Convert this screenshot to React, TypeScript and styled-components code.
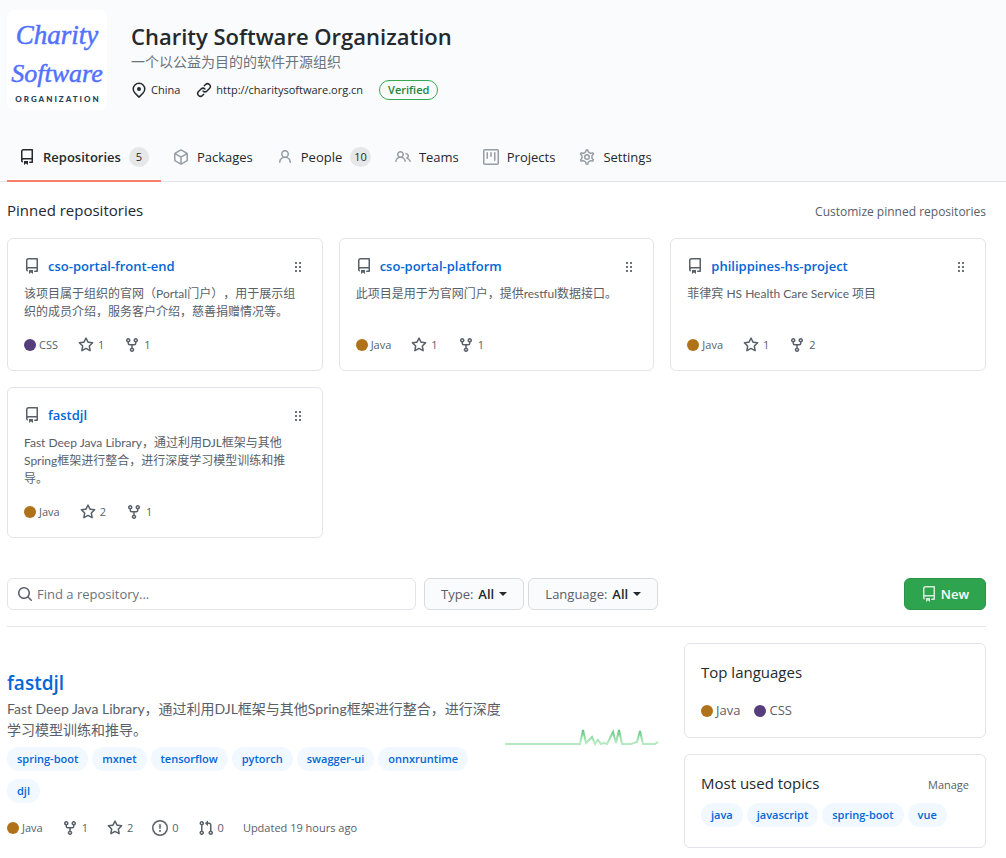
import React from "react";
import styled, { createGlobalStyle } from "styled-components";

const color = {
  text: "#24292e",
  muted: "#586069",
  faint: "#959da5",
  link: "#0366d6",
  border: "#e1e4e8",
  wash: "#fafbfc",
  tagBg: "#f1f8ff",
  green: "#2ea44f",
};

const GlobalStyle = createGlobalStyle`
  * { box-sizing: border-box; }
  body {
    margin: 0;
    background: #fff;
    color: ${color.text};
    font-family: "Open Sans", "Noto Sans CJK SC", sans-serif;
    font-size: 13px;
    line-height: 21px;
    text-spacing-trim: space-all;
  }
  h1, h2, h3, p, ul { margin: 0; padding: 0; }
  ul { list-style: none; }
  a { color: inherit; text-decoration: none; }
  svg { display: block; flex: none; }
`;

const paths = {
  repo: "M2 2.5A2.5 2.5 0 014.5 0h8.75a.75.75 0 01.75.75v12.5a.75.75 0 01-.75.75h-2.5a.75.75 0 110-1.5h1.75v-2h-8a1 1 0 00-.714 1.7.75.75 0 01-1.072 1.05A2.495 2.495 0 012 11.5v-9zm10.5-1V9h-8c-.356 0-.694.074-1 .208V2.5a1 1 0 011-1h8zM5 12.25v3.25a.25.25 0 00.4.2l1.45-1.087a.25.25 0 01.3 0L8.6 15.7a.25.25 0 00.4-.2v-3.25a.25.25 0 00-.25-.25h-3.5a.25.25 0 00-.25.25z",
  package: "M8.878.392a1.75 1.75 0 00-1.756 0l-5.25 3.045A1.75 1.75 0 001 4.951v6.098c0 .624.332 1.2.872 1.514l5.25 3.045a1.75 1.75 0 001.756 0l5.25-3.045c.54-.313.872-.89.872-1.514V4.951c0-.624-.332-1.2-.872-1.514L8.878.392zM7.875 1.69a.25.25 0 01.25 0l4.63 2.685L8 7.133 3.245 4.375l4.63-2.685zM2.5 5.677v5.372c0 .09.047.171.125.216l4.625 2.683V8.432L2.5 5.677zm6.25 8.271l4.625-2.683a.25.25 0 00.125-.216V5.677L8.75 8.432v5.516z",
  person: "M10.5 5a2.5 2.5 0 11-5 0 2.5 2.5 0 015 0zm.061 3.073a4 4 0 10-5.123 0 6.004 6.004 0 00-3.431 5.142.75.75 0 001.498.07 4.5 4.5 0 018.99 0 .75.75 0 101.498-.07 6.005 6.005 0 00-3.432-5.142z",
  people: "M5.5 3.5a2 2 0 100 4 2 2 0 000-4zM2 5.5a3.5 3.5 0 115.898 2.549 5.507 5.507 0 013.034 4.084.75.75 0 11-1.482.235 4.001 4.001 0 00-7.9 0 .75.75 0 01-1.482-.236A5.507 5.507 0 013.102 8.05 3.49 3.49 0 012 5.5zM11 4a.75.75 0 100 1.5 1.5 1.5 0 01.666 2.844.75.75 0 00-.416.672v.352a.75.75 0 00.574.73c1.2.289 2.162 1.2 2.522 2.372a.75.75 0 101.434-.44 5.01 5.01 0 00-2.56-3.012A3 3 0 0011 4z",
  project: "M1.75 0A1.75 1.75 0 000 1.75v12.5C0 15.216.784 16 1.75 16h12.5A1.75 1.75 0 0016 14.25V1.75A1.75 1.75 0 0014.25 0H1.75zM1.5 1.75a.25.25 0 01.25-.25h12.5a.25.25 0 01.25.25v12.5a.25.25 0 01-.25.25H1.75a.25.25 0 01-.25-.25V1.75zM11.75 3a.75.75 0 00-.75.75v7.5a.75.75 0 001.5 0v-7.5a.75.75 0 00-.75-.75zm-8.25.75a.75.75 0 011.5 0v5.5a.75.75 0 01-1.5 0v-5.5zM8 3a.75.75 0 00-.75.75v3.5a.75.75 0 001.5 0v-3.5A.75.75 0 008 3z",
  star: "M8 .25a.75.75 0 01.673.418l1.882 3.815 4.21.612a.75.75 0 01.416 1.279l-3.046 2.97.719 4.192a.75.75 0 01-1.088.791L8 12.347l-3.766 1.98a.75.75 0 01-1.088-.79l.72-4.194L.818 6.374a.75.75 0 01.416-1.28l4.21-.611L7.327.668A.75.75 0 018 .25zm0 2.445L6.615 5.5a.75.75 0 01-.564.41l-3.097.45 2.24 2.184a.75.75 0 01.216.664l-.528 3.084 2.769-1.456a.75.75 0 01.698 0l2.77 1.456-.53-3.084a.75.75 0 01.216-.664l2.24-2.183-3.096-.45a.75.75 0 01-.564-.41L8 2.694v.001z",
  fork: "M5 3.25a.75.75 0 11-1.5 0 .75.75 0 011.5 0zm0 2.122a2.25 2.25 0 10-1.5 0v.878A2.25 2.25 0 005.75 8.5h1.5v2.128a2.251 2.251 0 101.5 0V8.5h1.5a2.25 2.25 0 002.25-2.25v-.878a2.25 2.25 0 10-1.5 0v.878a.75.75 0 01-.75.75h-4.5A.75.75 0 015 6.25v-.878zm3.75 7.378a.75.75 0 11-1.5 0 .75.75 0 011.5 0zm3-8.75a.75.75 0 100-1.5.75.75 0 000 1.5z",
  search: "M11.5 7a4.499 4.499 0 11-8.998 0A4.499 4.499 0 0111.5 7zm-.82 4.74a6 6 0 111.06-1.06l3.04 3.04a.75.75 0 11-1.06 1.06l-3.04-3.04z",
  issue: "M8 1.5a6.5 6.5 0 100 13 6.5 6.5 0 000-13zM0 8a8 8 0 1116 0A8 8 0 010 8zm9 3a1 1 0 11-2 0 1 1 0 012 0zm-.25-6.25a.75.75 0 00-1.5 0v3.5a.75.75 0 001.5 0v-3.5z",
  pull: "M7.177 3.073L9.573.677A.25.25 0 0110 .854v4.792a.25.25 0 01-.427.177L7.177 3.427a.25.25 0 010-.354zM3.75 2.5a.75.75 0 100 1.5.75.75 0 000-1.5zm-2.25.75a2.25 2.25 0 113 2.122v5.256a2.251 2.251 0 11-1.5 0V5.372A2.25 2.25 0 011.5 3.25zM11 2.5h-1V4h1a1 1 0 011 1v5.628a2.251 2.251 0 101.5 0V5A2.5 2.5 0 0011 2.5zm1 10.25a.75.75 0 111.5 0 .75.75 0 01-1.5 0zM3.75 12a.75.75 0 100 1.5.75.75 0 000-1.5z",
  location: "M11.536 3.464a5 5 0 010 7.072L8 14.07l-3.536-3.535a5 5 0 117.072-7.072v.001zm1.06 8.132a6.5 6.5 0 10-9.192 0l3.535 3.536a1.5 1.5 0 002.122 0l3.535-3.536zM8 9a2 2 0 100-4 2 2 0 000 4z",
  link: "M7.775 3.275a.75.75 0 001.06 1.06l1.25-1.25a2 2 0 112.83 2.83l-2.5 2.5a2 2 0 01-2.83 0 .75.75 0 00-1.06 1.06 3.5 3.5 0 004.95 0l2.5-2.5a3.5 3.5 0 00-4.95-4.95l-1.25 1.25zm-4.69 9.64a2 2 0 010-2.83l2.5-2.5a2 2 0 012.83 0 .75.75 0 001.06-1.06 3.5 3.5 0 00-4.95 0l-2.5 2.5a3.5 3.5 0 004.95 4.95l1.25-1.25a.75.75 0 00-1.06-1.06l-1.25 1.25a2 2 0 01-2.83 0z",
};

type IconName = keyof typeof paths;

const Icon = ({ name }: { name: IconName }) => (
  <svg width="16" height="16" viewBox="0 0 16 16" fill="currentColor" fillRule="evenodd" aria-hidden="true">
    <path d={paths[name]} />
  </svg>
);

const GearIcon = () => (
  <svg width="16" height="16" viewBox="0 0 16 16" fill="none" stroke="currentColor" aria-hidden="true">
    <circle cx="8" cy="8" r="2.25" strokeWidth="1.5" />
    <path
      strokeWidth="1.35"
      transform="translate(8 8) scale(1.1) translate(-8 -8)"
      d="M7.429 1.525a6.593 6.593 0 011.142 0c.036.003.108.036.137.146l.289 1.105c.147.56.55.967.997 1.189.174.086.341.183.501.29.417.278.97.423 1.53.27l1.102-.303c.11-.03.175.016.195.046.219.31.41.641.573.989.014.031.022.11-.059.19l-.815.806c-.411.406-.562.957-.53 1.456a4.588 4.588 0 010 .582c-.032.499.119 1.05.53 1.456l.815.806c.08.08.073.159.059.19a6.494 6.494 0 01-.573.99c-.02.029-.086.074-.195.045l-1.103-.303c-.559-.153-1.112-.008-1.529.27-.16.107-.327.204-.5.29-.449.222-.851.628-.998 1.189l-.289 1.105c-.029.11-.101.143-.137.146a6.613 6.613 0 01-1.142 0c-.036-.003-.108-.037-.137-.146l-.289-1.105c-.147-.56-.55-.967-.997-1.189a4.502 4.502 0 01-.501-.29c-.417-.278-.97-.423-1.53-.27l-1.102.303c-.11.03-.175-.016-.195-.046a6.492 6.492 0 01-.573-.989c-.014-.031-.022-.11.059-.19l.815-.806c.411-.406.562-.957.53-1.456a4.587 4.587 0 010-.582c.032-.499-.119-1.05-.53-1.456l-.815-.806c-.08-.08-.073-.159-.059-.19a6.44 6.44 0 01.573-.99c.02-.029.086-.075.195-.045l1.103.303c.559.153 1.112.008 1.529-.27.16-.107.327-.204.5-.29.449-.222.851-.628.998-1.189l.289-1.105c.029-.11.101-.143.137-.146z"
    />
  </svg>
);

const Caret = () => (
  <svg width="8" height="4" viewBox="0 0 8 4" fill={color.text} aria-hidden="true">
    <path d="M0 0h8L4 4z" />
  </svg>
);

const Header = styled.header`
  padding: 10px 20px 0 7px;
  background: ${color.wash};
  border-bottom: 1px solid ${color.border};
`;

const Identity = styled.div`
  display: flex;
  gap: 24px;
`;

const Logo = styled.svg`
  border-radius: 6px;
  background: #fff;
`;

const OrgName = styled.h1`
  padding-top: 8px;
  font-size: 22px;
  font-weight: 600;
  line-height: 36px;
`;

const OrgTagline = styled.p`
  color: #6a737d;
  font-size: 14px;
  line-height: 16px;
`;

const OrgMeta = styled.ul`
  display: flex;
  align-items: center;
  gap: 16px;
  margin-top: 10px;
  font-size: 11px;
  line-height: 20px;
`;

const OrgMetaItem = styled.li`
  display: flex;
  align-items: center;
  gap: 4px;
`;

const Verified = styled.a`
  padding: 0 8px;
  border: 1px solid #34a853;
  border-radius: 10px;
  color: #22863a;
  font-weight: 600;
  line-height: 18px;
`;

const Tabs = styled.nav`
  display: flex;
  margin-top: 23px;
  margin-bottom: -1px;
`;

const Tab = styled.a<{ $active?: boolean }>`
  display: flex;
  align-items: center;
  gap: 8px;
  height: 49px;
  padding: 1px 12px 0;
  border-bottom: 2px solid ${(p) => (p.$active ? "#f9826c" : "transparent")};
  font-weight: ${(p) => (p.$active ? 600 : 400)};

  svg {
    color: ${(p) => (p.$active ? color.text : color.faint)};
  }
`;

const Counter = styled.span`
  min-width: 20px;
  padding: 0 4px;
  border-radius: 10px;
  background: #e6e7e9;
  font-size: 11px;
  font-weight: 500;
  line-height: 20px;
  text-align: center;
`;

const Page = styled.main`
  padding: 16px 20px 10px 7px;
`;

const SectionHead = styled.div`
  display: flex;
  align-items: center;
  justify-content: space-between;
`;

const Heading = styled.h2`
  font-size: 15px;
  font-weight: 400;
  line-height: 24px;
`;

const QuietLink = styled.a<{ $small?: boolean }>`
  padding-top: 3px;
  color: ${color.muted};
  font-size: ${(p) => (p.$small ? 11 : 12)}px;
`;

const CardGrid = styled.ul`
  display: grid;
  grid-template-columns: repeat(3, 1fr);
  gap: 16px;
  margin-top: 16px;
`;

const Card = styled.li`
  display: flex;
  flex-direction: column;
  padding: 16px;
  border: 1px solid ${color.border};
  border-radius: 6px;
  color: ${color.muted};
`;

const CardTitle = styled.div`
  display: flex;
  align-items: center;
  gap: 8px;
`;

const CardLink = styled.a`
  flex: 1;
  padding-top: 2px;
  color: ${color.link};
  font-weight: 600;
  line-height: 19px;
`;

const Grabber = styled.button`
  padding: 0;
  border: 0;
  background: none;
  color: #6a737d;
`;

const CardText = styled.p`
  flex: 1;
  margin: 9px 0 15px;
  font-family: Lato, "Noto Sans CJK SC", sans-serif;
  font-size: 12px;
  line-height: 18px;
`;

const Stats = styled.ul<{ $tight?: boolean }>`
  display: flex;
  align-items: center;
  gap: ${(p) => (p.$tight ? 19 : 20)}px;
  color: ${color.muted};
  font-size: 11px;
  line-height: 18px;
`;

const Stat = styled.li`
  display: flex;
  align-items: center;
  gap: 4px;
`;

const Language = styled.span<{ $dot: string }>`
  display: flex;
  align-items: center;
  gap: 3px;

  &::before {
    content: "";
    width: 12px;
    height: 12px;
    border-radius: 50%;
    background: ${(p) => p.$dot};
  }
`;

const Toolbar = styled.form`
  display: flex;
  gap: 4px;
  margin-top: 40px;
  padding-bottom: 16px;
  border-bottom: 1px solid ${color.border};
`;

const SearchBox = styled.label`
  display: flex;
  align-items: center;
  flex: 0 1 409px;
  gap: 4px;
  height: 32px;
  margin-right: 4px;
  padding: 0 9px;
  border: 1px solid ${color.border};
  border-radius: 6px;
  color: ${color.muted};
`;

const SearchInput = styled.input`
  flex: 1;
  min-width: 0;
  padding: 0;
  border: 0;
  outline: 0;
  background: none;
  color: ${color.text};
  font: inherit;

  &::placeholder {
    color: #6a737d;
  }
`;

const Filter = styled.label`
  display: flex;
  align-items: center;
  gap: 5px;
  height: 32px;
  padding: 0 16px;
  border: 1px solid #d9dcdf;
  border-radius: 6px;
  background: ${color.wash};
  color: ${color.muted};
  font-weight: 500;
`;

const FilterSelect = styled.select`
  appearance: none;
  padding: 0;
  border: 0;
  background: none;
  color: ${color.text};
  font: inherit;
  font-weight: 600;
`;

const NewButton = styled.button`
  display: flex;
  align-items: center;
  gap: 4px;
  height: 32px;
  margin-left: auto;
  padding: 0 16px;
  border: 1px solid #2a9548;
  border-radius: 6px;
  background: ${color.green};
  color: #fff;
  font: inherit;
  font-weight: 600;

  svg {
    opacity: 0.8;
  }
`;

const Columns = styled.div`
  display: grid;
  grid-template-columns: minmax(0, 1fr) 302px;
  gap: 24px;
  padding-top: 16px;
`;

const Repo = styled.article`
  display: flex;
  padding-top: 25px;
`;

const RepoBody = styled.div`
  flex: 1;
  min-width: 0;
`;

const RepoName = styled.h3`
  color: ${color.link};
  font-size: 19px;
  font-weight: 600;
  line-height: 30px;
`;

const RepoText = styled.p`
  margin-bottom: 7px;
  color: ${color.muted};
  font-family: Lato, "Noto Sans CJK SC", sans-serif;
  font-size: 14px;
`;

const Tags = styled.ul`
  display: flex;
  flex-wrap: wrap;
  gap: 8px 4px;
`;

const Tag = styled.a`
  display: block;
  padding: 0 10px;
  border-radius: 12px;
  background: ${color.tagBg};
  color: ${color.link};
  font-size: 11px;
  font-weight: 600;
  line-height: 24px;
`;

const RepoStats = styled(Stats)`
  margin-top: 16px;
`;

const Activity = styled.div`
  padding-top: 56px;
`;

const Side = styled.aside`
  display: flex;
  flex-direction: column;
  gap: 16px;
`;

const Panel = styled.section`
  padding: 16px;
  border: 1px solid ${color.border};
  border-radius: 6px;
`;

const LanguageList = styled.div`
  display: flex;
  gap: 14px;
  margin-top: 16px;
  color: ${color.muted};
`;

const TopicTags = styled(Tags)`
  margin: 8px 0 4px;
`;

const JAVA = { name: "Java", dot: "#b07219" };
const CSS = { name: "CSS", dot: "#563d7c" };

const pinned = [
  { name: "cso-portal-front-end", text: "该项目属于组织的官网（Portal门户），用于展示组织的成员介绍，服务客户介绍，慈善捐赠情况等。", lang: CSS, stars: 1, forks: 1 },
  { name: "cso-portal-platform", text: "此项目是用于为官网门户，提供restful数据接口。", lang: JAVA, stars: 1, forks: 1 },
  { name: "philippines-hs-project", text: "菲律宾 HS Health Care Service 项目", lang: JAVA, stars: 1, forks: 2 },
  { name: "fastdjl", text: "Fast Deep Java Library，通过利用DJL框架与其他Spring框架进行整合，进行深度学习模型训练和推导。", lang: JAVA, stars: 2, forks: 1 },
];

const repoTags = ["spring-boot", "mxnet", "tensorflow", "pytorch", "swagger-ui", "onnxruntime", "djl"];
const topics = ["java", "javascript", "spring-boot", "vue"];

const TagItems = ({ names }: { names: string[] }) => (
  <>
    {names.map((name) => (
      <li key={name}>
        <Tag href="#">{name}</Tag>
      </li>
    ))}
  </>
);

export default function App() {
  return (
    <>
      <GlobalStyle />
      <Header>
        <Identity>
          <Logo width="100" height="100" viewBox="0 0 100 100" role="img" aria-label="Charity Software Organization">
            <g fill="#5271ff" stroke="#5271ff" strokeWidth="0.5" fontFamily="Liberation Serif, serif" fontStyle="italic" textAnchor="middle">
              <text x="50" y="34" fontSize="27">Charity</text>
              <text x="50" y="72" fontSize="26">Software</text>
            </g>
            <text x="51" y="92" fill="#234058" fontFamily="Lato, sans-serif" fontSize="8" fontWeight="900" letterSpacing="2" textAnchor="middle">
              ORGANIZATION
            </text>
          </Logo>
          <div>
            <OrgName>Charity Software Organization</OrgName>
            <OrgTagline>一个以公益为目的的软件开源组织</OrgTagline>
            <OrgMeta>
              <OrgMetaItem>
                <Icon name="location" />
                China
              </OrgMetaItem>
              <OrgMetaItem>
                <Icon name="link" />
                <a href="#">http://charitysoftware.org.cn</a>
              </OrgMetaItem>
              <OrgMetaItem>
                <Verified href="#">Verified</Verified>
              </OrgMetaItem>
            </OrgMeta>
          </div>
        </Identity>
        <Tabs>
          <Tab href="#" $active>
            <Icon name="repo" />
            Repositories
            <Counter>5</Counter>
          </Tab>
          <Tab href="#">
            <Icon name="package" />
            Packages
          </Tab>
          <Tab href="#">
            <Icon name="person" />
            People
            <Counter>10</Counter>
          </Tab>
          <Tab href="#">
            <Icon name="people" />
            Teams
          </Tab>
          <Tab href="#">
            <Icon name="project" />
            Projects
          </Tab>
          <Tab href="#">
            <GearIcon />
            Settings
          </Tab>
        </Tabs>
      </Header>

      <Page>
        <SectionHead>
          <Heading>Pinned repositories</Heading>
          <QuietLink href="#">Customize pinned repositories</QuietLink>
        </SectionHead>
        <CardGrid>
          {pinned.map((repo) => (
            <Card key={repo.name}>
              <CardTitle>
                <Icon name="repo" />
                <CardLink href="#">{repo.name}</CardLink>
                <Grabber type="button" aria-label={`Move ${repo.name}`}>
                  <svg width="16" height="16" viewBox="0 0 16 16" fill="currentColor" aria-hidden="true">
                    <path d="M5 4h2v2H5zM9 4h2v2H9zM5 8h2v2H5zM9 8h2v2H9zM5 12h2v2H5zM9 12h2v2H9z" />
                  </svg>
                </Grabber>
              </CardTitle>
              <CardText>{repo.text}</CardText>
              <Stats>
                <Stat>
                  <Language $dot={repo.lang.dot}>{repo.lang.name}</Language>
                </Stat>
                <Stat>
                  <Icon name="star" />
                  {repo.stars}
                </Stat>
                <Stat>
                  <Icon name="fork" />
                  {repo.forks}
                </Stat>
              </Stats>
            </Card>
          ))}
        </CardGrid>

        <Toolbar>
          <SearchBox>
            <Icon name="search" />
            <SearchInput type="search" placeholder="Find a repository..." aria-label="Find a repository" />
          </SearchBox>
          <Filter>
            Type:
            <FilterSelect>
              <option>All</option>
            </FilterSelect>
            <Caret />
          </Filter>
          <Filter>
            Language:
            <FilterSelect>
              <option>All</option>
            </FilterSelect>
            <Caret />
          </Filter>
          <NewButton type="button">
            <Icon name="repo" />
            New
          </NewButton>
        </Toolbar>

        <Columns>
          <Repo>
            <RepoBody>
              <RepoName>
                <a href="#">fastdjl</a>
              </RepoName>
              <RepoText>{pinned[3].text}</RepoText>
              <Tags>
                <TagItems names={repoTags} />
              </Tags>
              <RepoStats $tight>
                <Stat>
                  <Language $dot={JAVA.dot}>Java</Language>
                </Stat>
                <Stat>
                  <Icon name="fork" />1
                </Stat>
                <Stat>
                  <Icon name="star" />2
                </Stat>
                <Stat>
                  <Icon name="issue" />0
                </Stat>
                <Stat>
                  <Icon name="pull" />0
                </Stat>
                <Stat>Updated 19 hours ago</Stat>
              </RepoStats>
            </RepoBody>
            <Activity>
              <svg width="155" height="30" viewBox="0 0 155 30" role="img" aria-label="Past year of activity">
                <defs>
                  <linearGradient id="activity" gradientUnits="userSpaceOnUse" x1="0" y1="20" x2="0" y2="5">
                    <stop offset="0.1" stopColor="#b5eac0" />
                    <stop offset="0.7" stopColor="#7bd194" />
                    <stop offset="1" stopColor="#5fc27d" />
                  </linearGradient>
                </defs>
                <polyline
                  fill="none"
                  stroke="url(#activity)"
                  strokeWidth="2"
                  points="0,20 75,20 78,6 81,19 87,13 90,20 93,16 96,20 99,19 102,20 108,8 111,19 114,6 117,20 126,20 132,18 135,7 138,20 150,20 153,18"
                />
              </svg>
            </Activity>
          </Repo>

          <Side>
            <Panel>
              <Heading>Top languages</Heading>
              <LanguageList>
                <Language $dot={JAVA.dot}>Java</Language>
                <Language $dot={CSS.dot}>CSS</Language>
              </LanguageList>
            </Panel>
            <Panel>
              <SectionHead>
                <Heading>Most used topics</Heading>
                <QuietLink href="#" $small>
                  Manage
                </QuietLink>
              </SectionHead>
              <TopicTags>
                <TagItems names={topics} />
              </TopicTags>
            </Panel>
          </Side>
        </Columns>
      </Page>
    </>
  );
}
